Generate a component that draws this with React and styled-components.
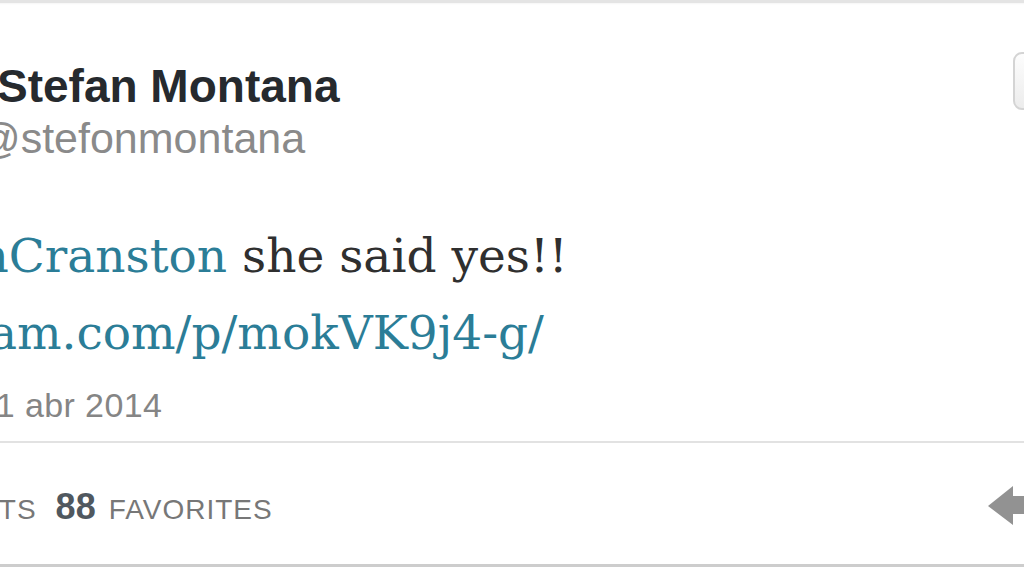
import React from 'react';
import styled, { createGlobalStyle } from 'styled-components';

const GlobalStyle = createGlobalStyle`
  html, body {
    margin: 0;
    padding: 0;
    background: #fff;
    overflow: hidden;
  }
  body {
    width: 1024px;
    height: 576px;
  }
`

const Card = styled.div`
  box-sizing: border-box;
  width: 1353px;
  margin-left: -180px;
  padding: 49px 30px 0 0;
  border-top: 3px solid #e4e4e4;
  box-shadow: inset 0 1px 2px rgba(0, 0, 0, 0.04);
  background: #fff;
  font-family: "Liberation Sans", Arial, sans-serif;
`

const Header = styled.div`
  display: flex;
  align-items: flex-start;
`

const Avatar = styled.div`
  width: 147px;
  height: 147px;
  margin: 8px 30px 0 0;
  border-radius: 10px;
  background: #d9d2c8;
  flex-shrink: 0;
`

const NameBlock = styled.div`
  display: flex;
  flex-direction: column;
  padding-top: 11px;
`

const Name = styled.div`
  font-size: 46px;
  line-height: 46px;
  font-weight: bold;
  color: #262a2e;
`

const Handle = styled.div`
  margin: 8px 0 0 -20px;
  font-size: 43px;
  line-height: 43px;
  color: #8a8a8a;
`

const FollowButton = styled.button`
  margin-left: auto;
  width: 130px;
  height: 58px;
  border: 2px solid #d4d4d4;
  border-radius: 9px;
  background: linear-gradient(#fdfdfd, #ececec);
  font-family: inherit;
  font-size: 26px;
  font-weight: bold;
  color: #333;
`

const TweetText = styled.p`
  margin: 10px 0 0;
  font-family: "DejaVu Serif", "Liberation Serif", serif;
  font-size: 47px;
  line-height: 77px;
  color: #2f2f2f;
`

const Link = styled.a`
  color: #2b7d97;
  text-decoration: none;
`

const Meta = styled.div`
  margin-top: 17px;
  padding-bottom: 19px;
  font-size: 34px;
  line-height: 34px;
  letter-spacing: 0.4px;
  color: #858585;
  border-bottom: 2px solid #e2e2e2;
  margin-right: -30px;
`

const StatsBar = styled.div`
  display: flex;
  align-items: center;
  height: 42px;
  padding: 43px 30px 36px 0;
  margin-right: -30px;
  border-bottom: 3px solid #cdcdcd;
`

const Stat = styled.div`
  display: flex;
  align-items: baseline;
  margin-right: 19px;
`

const StatCount = styled.span`
  font-size: 36px;
  line-height: 36px;
  font-weight: bold;
  color: #50585f;
  margin-right: 13px;
`

const StatLabel = styled.span`
  font-size: 28px;
  line-height: 30px;
  letter-spacing: 1px;
  color: #777;
  text-transform: uppercase;
`

const Actions = styled.div`
  margin-left: auto;
  width: 155px;
  display: flex;
  align-items: center;
  gap: 30px;
`

const ReplyIcon = () => (
  <svg width="60" height="42" viewBox="0 0 60 42">
    <path
      d="M0 20 L25 0 L25 10 L42 10 Q58 10 58 -6 L58 -20 L58 10 Q58 28 42 28 L25 28 L25 39 Z"
      fill="#929292"
    />
  </svg>
)

const RetweetIcon = () => (
  <svg width="40" height="30" viewBox="0 0 40 30">
    <path d="M4 10 L12 2 L20 10 H15 V22 H30 L34 26 H11 V10 Z" fill="#929292" />
  </svg>
)

const stats = [
  { count: 52, label: 'Retweets' },
  { count: 88, label: 'Favorites' },
]

const App = () => {
  return <>
    <GlobalStyle />
    <Card>
      <Header>
        <Avatar />
        <NameBlock>
          <Name>Stefan Montana</Name>
          <Handle>@stefonmontana</Handle>
        </NameBlock>
        <FollowButton>Seguir</FollowButton>
      </Header>
      <TweetText>
        <Link href="#">@BryanCranston</Link> she said yes!!<br />
        <Link href="#">instagram.com/p/mokVK9j4-g/</Link>
      </TweetText>
      <Meta>9:21 AM - 11 abr 2014</Meta>
      <StatsBar>
        {stats.map((s) => (
          <Stat key={s.label}>
            <StatCount>{s.count}</StatCount>
            <StatLabel>{s.label}</StatLabel>
          </Stat>
        ))}
        <Actions>
          <ReplyIcon />
          <RetweetIcon />
        </Actions>
      </StatsBar>
    </Card>
  </>
}

export default App;
